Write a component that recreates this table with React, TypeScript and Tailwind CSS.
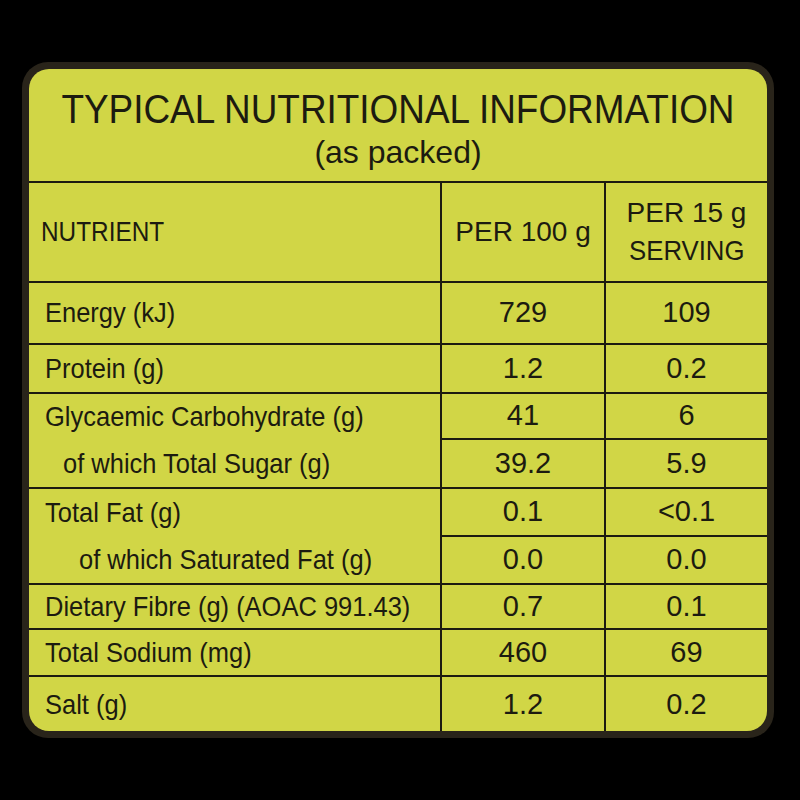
import React from "react"

type Row = {
  label: string
  indent?: 0 | 1 | 2
  per100: string
  perServing: string
  h: string
  // left cell continues into next row (no divider under it)
  joined?: boolean
}

const ROWS: Row[] = [
  { label: "Energy (kJ)", per100: "729", perServing: "109", h: "h-[62px]" },
  { label: "Protein (g)", per100: "1.2", perServing: "0.2", h: "h-[49px]" },
  { label: "Glycaemic Carbohydrate (g)", per100: "41", perServing: "6", h: "h-[46px]", joined: true },
  { label: "of which Total Sugar (g)", indent: 1, per100: "39.2", perServing: "5.9", h: "h-[49px]" },
  { label: "Total Fat (g)", per100: "0.1", perServing: "<0.1", h: "h-[48px]", joined: true },
  { label: "of which Saturated Fat (g)", indent: 2, per100: "0.0", perServing: "0.0", h: "h-[48px]" },
  { label: "Dietary Fibre (g) (AOAC 991.43)", per100: "0.7", perServing: "0.1", h: "h-[45px]" },
  { label: "Total Sodium (mg)", per100: "460", perServing: "69", h: "h-[47px]" },
  { label: "Salt (g)", per100: "1.2", perServing: "0.2", h: "h-[56px]" },
]

// narrow face is not installed, so the condensed look comes from a horizontal squeeze
const font = "font-['Liberation_Sans',Arial,sans-serif]"

export default function App() {
  return (
    <div className="w-[800px] h-[800px] bg-black pt-[62px] pl-[22px]">
      <div className="w-[752px] h-[676px] rounded-[26px] bg-[#29241a] p-[7px]">
        <div className={`h-full rounded-[20px] bg-[#d1d646] text-[#1c1b10] overflow-hidden ${font}`}>
          {/* Heading */}
          <div className="h-[112px] flex flex-col items-center pt-[17px]">
            <h1 className="text-[41px] leading-[46px] whitespace-nowrap scale-x-[0.9]">
              TYPICAL NUTRITIONAL INFORMATION
            </h1>
            <p className="text-[32px] leading-[36px] mt-[2px]">(as packed)</p>
          </div>

          {/* Table */}
          <div className="border-t-2 border-[#1c1b10] grid grid-cols-[411px_164px_1fr] text-[28px]">
            <div className="h-[100px] border-b-2 border-[#1c1b10] flex items-center pl-[12px]">
              <span className="inline-block origin-left scale-x-[0.87]">NUTRIENT</span>
            </div>
            <div className="h-[100px] border-b-2 border-l-2 border-[#1c1b10] flex items-center justify-center">PER 100 g</div>
            <div className="h-[100px] border-b-2 border-l-2 border-[#1c1b10] flex flex-col items-center justify-center leading-[38px]">
              <span>PER 15 g</span>
              <span className="scale-x-[0.92]">SERVING</span>
            </div>

            {ROWS.map((row, i) => {
              const last = i === ROWS.length - 1
              const pad = row.indent === 2 ? "pl-[50px]" : row.indent === 1 ? "pl-[34px]" : "pl-[16px]"
              const cellB = last ? "" : "border-b-2"
              return (
                <React.Fragment key={row.label}>
                  <div className={`${row.h} ${row.joined || last ? "" : "border-b-2"} border-[#1c1b10] flex items-center ${pad} whitespace-nowrap`}>
                    <span className="inline-block origin-left scale-x-[0.91]">{row.label}</span>
                  </div>
                  <div className={`${row.h} ${cellB} border-l-2 border-[#1c1b10] flex items-center justify-center text-[29px]`}>
                    {row.per100}
                  </div>
                  <div className={`${row.h} ${cellB} border-l-2 border-[#1c1b10] flex items-center justify-center text-[29px]`}>
                    {row.perServing}
                  </div>
                </React.Fragment>
              )
            })}
          </div>
        </div>
      </div>
    </div>
  )
}
